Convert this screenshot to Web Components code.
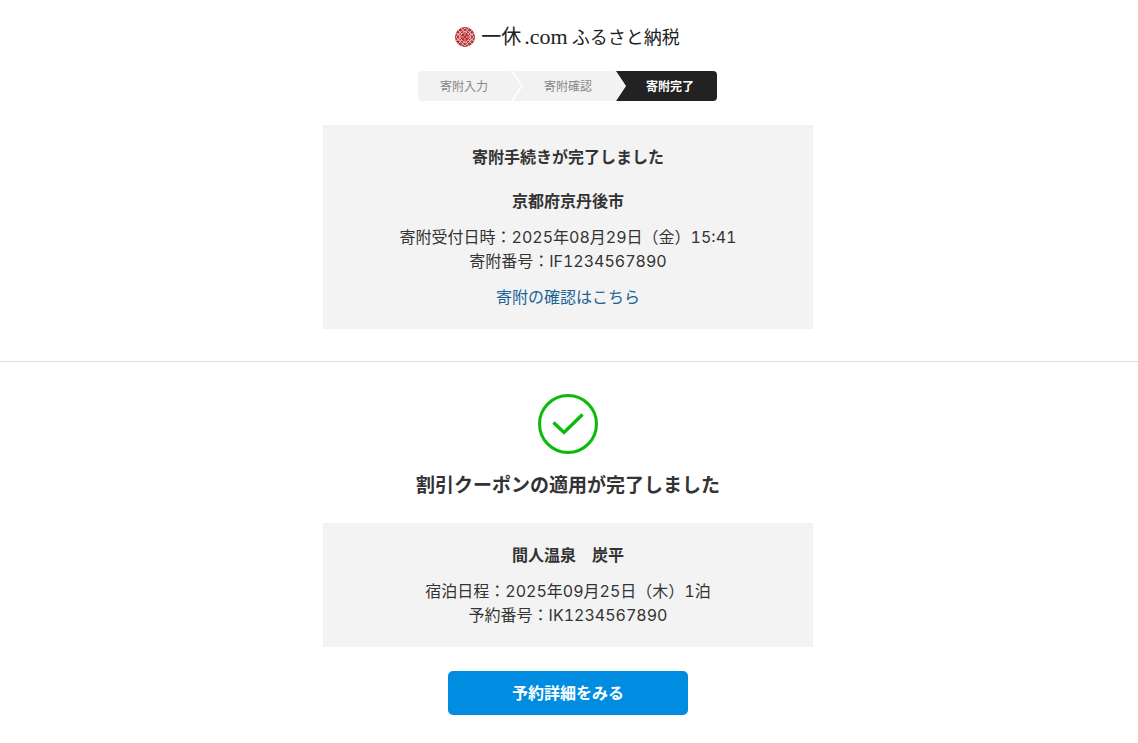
<!DOCTYPE html>
<html lang="ja">
<head>
<meta charset="utf-8">
<meta name="viewport" content="width=device-width, initial-scale=1">
<title>寄附完了 | 一休.comふるさと納税</title>
<style>
body{margin:0;background:#fff;color:#333;font:16px/24px Inter,"Noto Sans CJK JP",sans-serif;font-variant-numeric:tabular-nums}
</style>
</head>
<body>
<donation-page></donation-page>
<script>
const define = (name, html) => {
  const template = document.createElement('template');
  template.innerHTML = html;
  customElements.define(name, class extends HTMLElement {
    constructor() {
      super();
      this.attachShadow({ mode: 'open' }).append(template.content.cloneNode(true));
    }
  });
};

define('site-logo', `
<style>
:host{display:block}
a{display:flex;align-items:center;justify-content:center;gap:6px;color:#222;text-decoration:none;height:30px}
svg{width:20px;height:20px;flex:none}
.name{display:flex;align-items:baseline;font-family:"Liberation Serif","Noto Sans CJK JP",serif;font-weight:400;line-height:30px;white-space:nowrap}
.brand{font-size:20px}
.domain{font-size:22px;padding:0 4px 0 3px}
.service{font-size:18px}
</style>
<a href="#">
<svg viewBox="0 0 20 20" aria-hidden="true">
<defs><clipPath id="c"><circle cx="10" cy="10" r="10"/></clipPath></defs>
<circle cx="10" cy="10" r="10" fill="#b5333b"/>
<g clip-path="url(#c)" fill="none" stroke="#f0c9c4" stroke-width=".8">
<path d="M10 1l9 9-9 9-9-9zM10 4l6 6-6 6-6-6zM3 3l4 4M17 3l-4 4M3 17l4-4M17 17l-4-4M6 1l3 4M14 1l-3 4M6 19l3-4M14 19l-3-4M1 6l4 3M1 14l4-3M19 6l-4 3M19 14l-4-3M10 4v5M10 11v5M4 10h5M11 10h5M5 4v3H2M15 4v3h3M5 16v-3H2M15 16v-3h3"/>
</g></svg>
<span class="name"><span class="brand">一休</span><span class="domain">.com</span><span class="service">ふるさと納税</span></span>
</a>`);

define('progress-steps', `
<style>
:host{display:block}
ol{display:flex;justify-content:center;width:fit-content;height:30px;margin:0 auto;padding:0;list-style:none;border-radius:4px;overflow:hidden;font-size:12px;line-height:32px;text-align:center;color:#888}
li{box-sizing:border-box;flex:none;background:#f2f2f2}
li:nth-child(1){width:103px;padding-right:11px;clip-path:polygon(0 0,calc(100% - 10px) 0,100% 50%,calc(100% - 10px) 100%,0 100%)}
li:nth-child(2){width:112px;margin-left:-8px;padding-right:2px;clip-path:polygon(0 0,calc(100% - 10px) 0,100% 50%,calc(100% - 10px) 100%,0 100%,10px 50%)}
li:nth-child(3){width:101px;margin-left:-9px;padding-left:7px;background:#222;color:#fff;font-weight:700;clip-path:polygon(0 0,100% 0,100% 100%,0 100%,10px 50%)}
</style>
<ol><li>寄附入力</li><li>寄附確認</li><li aria-current="step">寄附完了</li></ol>`);

define('info-card', `
<style>
:host{display:block;background:#f3f3f3;padding:20px;text-align:center}
</style><slot></slot>`);

define('success-mark', `
<style>:host{display:block}svg{display:block;width:60px;height:60px;margin:0 auto}</style>
<svg viewBox="0 0 60 60" role="img" aria-label="完了" fill="none" stroke="#0abb0a"><circle cx="30" cy="30" r="28.5" stroke-width="3"/><path d="M15.5 28.5l10.5 10L44.5 20.5" stroke-width="3.4"/></svg>`);

define('primary-button', `
<style>
:host{display:flex;justify-content:center}
button{width:240px;height:44px;margin:0;padding:0;border:0;border-radius:5px;background:#008de1;color:#fff;font:inherit;font-weight:700;cursor:pointer}
</style><button type="button"><slot></slot></button>`);

define('donation-page', `
<style>
:host{display:block}
header,main section{padding-left:15px;padding-right:17px}
header{padding-top:22px;padding-right:18px}
progress-steps{margin-top:19px}
.donation{padding-top:24px;padding-bottom:32px;border-bottom:1px solid #ddd}
.coupon{padding-top:32px;padding-bottom:28px}
info-card{max-width:450px;margin:0 auto}
h1,h2,p{margin:0}
h1,h2{font-size:16px;line-height:24px;font-weight:700}
h1+h2{margin-top:20px}
p{margin-top:12px}
.headline{margin:16px 0 22px;font-size:19px;line-height:31px;text-align:center}
a{color:#1a6496;text-decoration:none}
primary-button{margin-top:24px}
</style>
<header><site-logo></site-logo><progress-steps></progress-steps></header>
<main>
<section class="donation">
<info-card>
<h1>寄附手続きが完了しました</h1>
<h2>京都府京丹後市</h2>
<p>寄附受付日時：2025年08月29日（金）15:41<br>寄附番号：IF1234567890</p>
<p><a href="#">寄附の確認はこちら</a></p>
</info-card>
</section>
<section class="coupon">
<success-mark></success-mark>
<h2 class="headline">割引クーポンの適用が完了しました</h2>
<info-card>
<h2>間人温泉　炭平</h2>
<p>宿泊日程：2025年09月25日（木）1泊<br>予約番号：IK1234567890</p>
</info-card>
<primary-button>予約詳細をみる</primary-button>
</section>
</main>`);
</script>
</body>
</html>
